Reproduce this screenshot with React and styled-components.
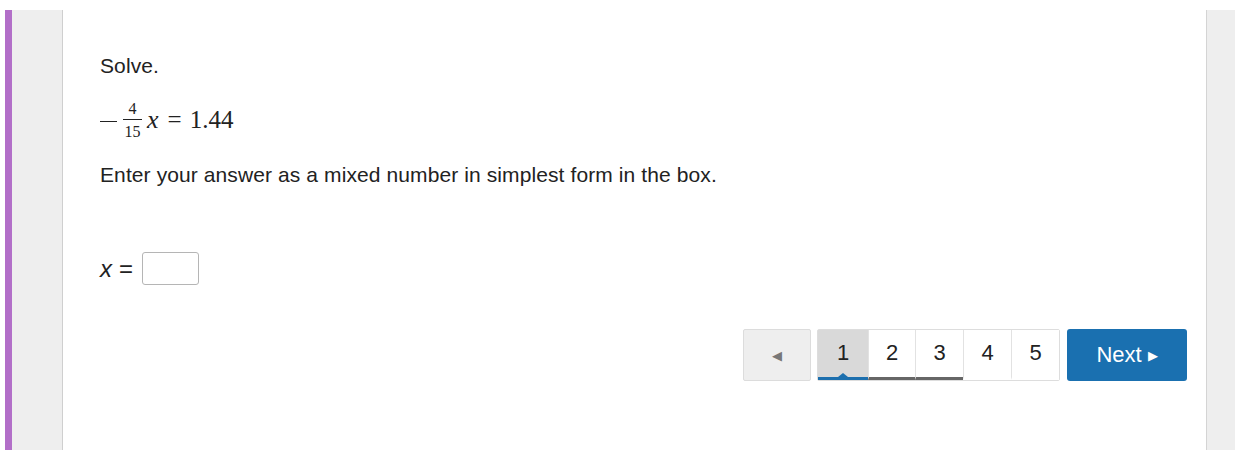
import React from "react";
import styled, { createGlobalStyle } from "styled-components";

const GlobalStyle = createGlobalStyle`
  html, body {
    margin: 0;
    padding: 0;
    background: #fff;
  }
  body {
    font-family: "Liberation Sans", Arial, sans-serif;
    color: #222;
  }
`;

const Frame = styled.div`
  display: flex;
  height: 440px;
  margin-top: 10px;
  margin-left: 5px;
`;

const SideRail = styled.div`
  width: 50px;
  background: #eeeeee;
  border-left: ${(p) => (p.accent ? "7px solid #b26fc8" : "none")};
  border-right: ${(p) => (p.accent ? "1px solid #cfcfcf" : "none")};
  box-shadow: ${(p) => (p.accent ? "none" : "inset 1px 0 0 #d4d4d4")};
  flex: ${(p) => (p.accent ? "0 0 auto" : "1")};
`;

const Content = styled.main`
  flex: 0 0 1143px;
  background: #fff;
  padding: 42px 0 0 37px;
  box-sizing: border-box;
  display: flex;
  flex-direction: column;
`;

const Para = styled.p`
  margin: 0;
  font-size: 21px;
  letter-spacing: 0.1px;
  line-height: 28px;
  color: #222;
`;

const MathLine = styled.div`
  display: flex;
  align-items: center;
  margin-top: 17px;
  font-family: "Liberation Serif", "Times New Roman", serif;
  font-size: 25px;
  color: #222;
  height: 46px;
`;

const Minus = styled.span`
  display: inline-block;
  width: 17px;
  height: 1px;
  background: #222;
  margin-right: 6px;
  position: relative;
  top: 1px;
`;

const Frac = styled.span`
  display: inline-flex;
  flex-direction: column;
  align-items: center;
  font-size: 16px;
  line-height: 15px;
  margin-right: 5px;
`;

const Num = styled.span`
  padding: 0 1px 3px;
  border-bottom: 1px solid #222;
  min-width: 17px;
  text-align: center;
`;

const Den = styled.span`
  padding-top: 4px;
`;

const Var = styled.i`
  font-size: 26px;
  margin-right: 9px;
`;

const Eq = styled.span`
  margin-right: 8px;
`;

const Instruction = styled(Para)`
  margin-top: 18px;
`;

const AnswerRow = styled.div`
  display: flex;
  align-items: center;
  gap: 7px;
  margin-top: 63px;
  font-size: 24px;
`;

const VarLabel = styled.span`
  font-style: ${(p) => (p.italic ? "italic" : "normal")};
`;

const AnswerBox = styled.input`
  width: 57px;
  height: 33px;
  margin-left: 2px;
  box-sizing: border-box;
  border: 1px solid #b5b5b5;
  border-radius: 3px;
  font-size: 18px;
  padding: 0 6px;
  outline: none;
`;

const Nav = styled.div`
  display: flex;
  justify-content: flex-end;
  align-items: flex-start;
  margin-top: 44px;
  padding-right: 19px;
`;

const PrevButton = styled.button`
  width: 68px;
  height: 52px;
  margin-right: 6px;
  background: #eeeeee;
  border: 1px solid #dcdcdc;
  border-radius: 2px;
  color: #777;
  font-size: 13px;
  padding: 0;
  cursor: pointer;
`;

const Pages = styled.div`
  display: flex;
  border: 1px solid #dddddd;
  border-radius: 2px;
  height: 52px;
  box-sizing: border-box;
  margin-right: 7px;
`;

const Page = styled.button`
  position: relative;
  width: ${(p) => p.w}px;
  height: 50px;
  border: none;
  border-left: ${(p) => (p.first ? "none" : "1px solid #e2e2e2")};
  background: ${(p) => (p.active ? "#d9d9d9" : "#fff")};
  font-family: "Liberation Sans", Arial, sans-serif;
  font-size: 22px;
  color: #222;
  padding: 0 0 1px;
  cursor: pointer;
  border-bottom: ${(p) =>
    p.active ? "3px solid #1c6fae" : p.seen ? "3px solid #666" : "3px solid transparent"};
  box-sizing: border-box;
`;

const Notch = styled.span`
  position: absolute;
  left: 50%;
  bottom: 0;
  transform: translateX(-50%);
  width: 0;
  height: 0;
  border-left: 5px solid transparent;
  border-right: 5px solid transparent;
  border-bottom: 4px solid #1c6fae;
`;

const NextButton = styled.button`
  width: 120px;
  height: 52px;
  background: #1a70b0;
  border: none;
  border-radius: 3px;
  color: #fff;
  font-family: "Liberation Sans", Arial, sans-serif;
  font-size: 22px;
  padding: 0;
  cursor: pointer;
  display: flex;
  align-items: center;
  justify-content: center;
  gap: 6px;
`;

const Arrow = styled.span`
  font-size: 13px;
`;

const pages = [
  { n: 1, w: 50, active: true },
  { n: 2, w: 47, seen: true },
  { n: 3, w: 48, seen: true },
  { n: 4, w: 48 },
  { n: 5, w: 48 },
];

export default function App() {
  return (
    <>
      <GlobalStyle />
      <Frame>
        <SideRail accent />
        <Content>
          <Para>Solve.</Para>
          <MathLine>
            <Minus aria-label="minus" />
            <Frac>
              <Num>4</Num>
              <Den>15</Den>
            </Frac>
            <Var>x</Var>
            <Eq>=</Eq>
            <span>1.44</span>
          </MathLine>
          <Instruction>Enter your answer as a mixed number in simplest form in the box.</Instruction>
          <AnswerRow>
            <VarLabel italic>x</VarLabel>
            <VarLabel>=</VarLabel>
            <AnswerBox type="text" aria-label="answer" />
          </AnswerRow>
          <Nav>
            <PrevButton aria-label="Previous">◀</PrevButton>
            <Pages>
              {pages.map((p, i) => (
                <Page key={p.n} w={p.w} first={i === 0} active={p.active} seen={p.seen}>
                  {p.n}
                  {p.active && <Notch />}
                </Page>
              ))}
            </Pages>
            <NextButton>
              Next <Arrow>▶</Arrow>
            </NextButton>
          </Nav>
        </Content>
        <SideRail />
      </Frame>
    </>
  );
}
